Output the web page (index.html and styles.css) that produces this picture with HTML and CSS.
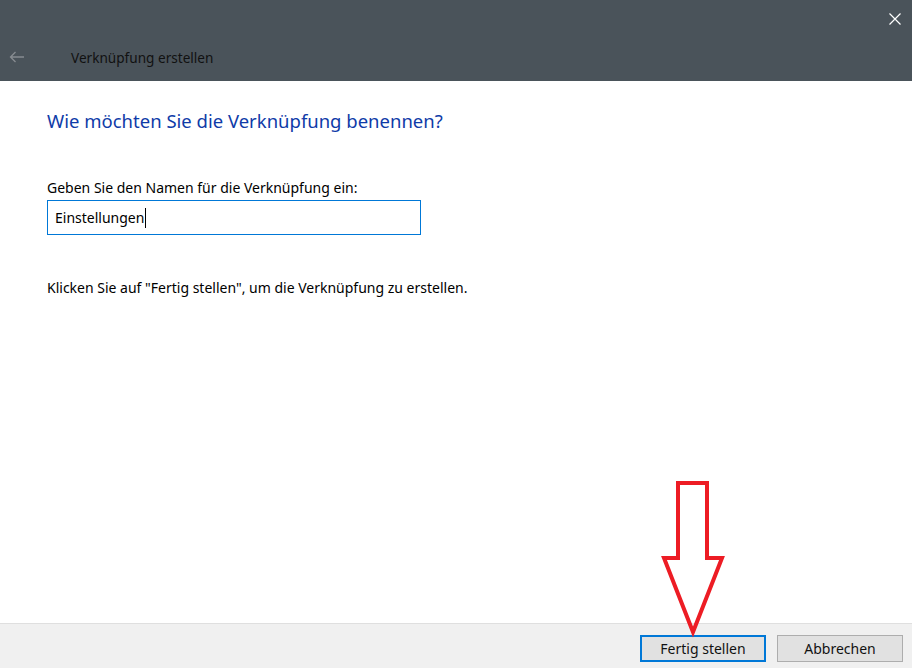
FILE: index.html
```html
<!DOCTYPE html>
<html lang="de">
<head>
    <meta charset="UTF-8">
    <meta name="viewport" content="width=device-width, initial-scale=1.0">
    <title>Verknüpfung erstellen</title>
    <link rel="stylesheet" href="styles.css">
</head>
<body>
    <div id="window">
        <div class="titlebar">
            <svg class="back" width="16" height="12" viewBox="0 0 16 12">
                <path d="M15 6H1.5M6.5 1L1.5 6l5 5" fill="none" stroke="#878c91" stroke-width="1.3"/>
            </svg>
            <span class="title">Verknüpfung erstellen</span>
            <svg class="close" width="12" height="12" viewBox="0 0 12 12">
                <path d="M0.5 0.5l11 11M11.5 0.5l-11 11" stroke="#fff" stroke-width="1.2"/>
            </svg>
        </div>

        <div class="content">
            <h1>Wie möchten Sie die Verknüpfung benennen?</h1>
            <label class="field-label" for="name">Geben Sie den Namen für die Verknüpfung ein:</label>
            <div class="input"><span>Einstellungen</span><span class="caret"></span></div>
            <p class="hint">Klicken Sie auf "Fertig stellen", um die Verknüpfung zu erstellen.</p>
        </div>

        <div class="footer">
            <button class="btn primary">Fertig stellen</button>
            <button class="btn">Abbrechen</button>
        </div>

        <!-- red annotation arrow pointing at the finish button -->
        <svg class="arrow" width="70" height="160" viewBox="0 0 70 160">
            <path d="M17 3H46V78H61L32 152L3 78H17Z" fill="none" stroke="#ed1c24" stroke-width="4" stroke-linejoin="miter"/>
        </svg>
    </div>
</body>
</html>
```

FILE: styles.css
```css
body {
    margin: 0;
    font-family: "Noto Sans", "Open Sans", sans-serif;
    background: #fff;
}

#window {
    position: relative;
    width: 912px;
    height: 668px;
    display: flex;
    flex-direction: column;
    overflow: hidden;
}

.titlebar {
    height: 81px;
    background-color: #4a535a;
    position: relative;
    display: flex;
    align-items: flex-end;
    padding-bottom: 13px;
    box-sizing: border-box;
}

.back {
    margin-left: 9px;
    margin-bottom: 5px;
}

.title {
    margin-left: 46px;
    font-size: 13.6px;
    color: #111;
    line-height: 20px;
}

.close {
    position: absolute;
    top: 13px;
    right: 11px;
}

.content {
    flex: 1;
    padding: 26px 47px 0;
}

h1 {
    margin: 0;
    font-size: 18.5px;
    font-weight: normal;
    color: #0f3ba8;
    line-height: 28px;
}

.field-label {
    display: block;
    margin-top: 43px;
    font-size: 14px;
    color: #000;
    line-height: 20px;
}

.input {
    margin-top: 2px;
    width: 374px;
    height: 35px;
    box-sizing: border-box;
    border: 1px solid #0078d7;
    display: flex;
    align-items: center;
    padding-left: 7px;
    font-size: 14px;
    color: #000;
}

.caret {
    display: inline-block;
    width: 1px;
    height: 20px;
    background: #000;
    margin-left: 1px;
}

.hint {
    margin: 43px 0 0;
    font-size: 14px;
    color: #000;
    line-height: 20px;
}

.footer {
    height: 45px;
    background-color: #f0f0f0;
    border-top: 1px solid #dfdfdf;
    display: flex;
    justify-content: flex-end;
    align-items: flex-start;
    padding: 11px 9px 0 0;
    box-sizing: border-box;
    gap: 11px;
}

.btn {
    width: 126px;
    height: 27px;
    background-color: #e1e1e1;
    border: 1px solid #adadad;
    font-family: "Noto Sans", "Open Sans", sans-serif;
    font-size: 14px;
    color: #111;
    padding: 0;
}

.btn.primary {
    border: 2px solid #0078d7;
}

.arrow {
    position: absolute;
    left: 661px;
    top: 480px;
}
```
